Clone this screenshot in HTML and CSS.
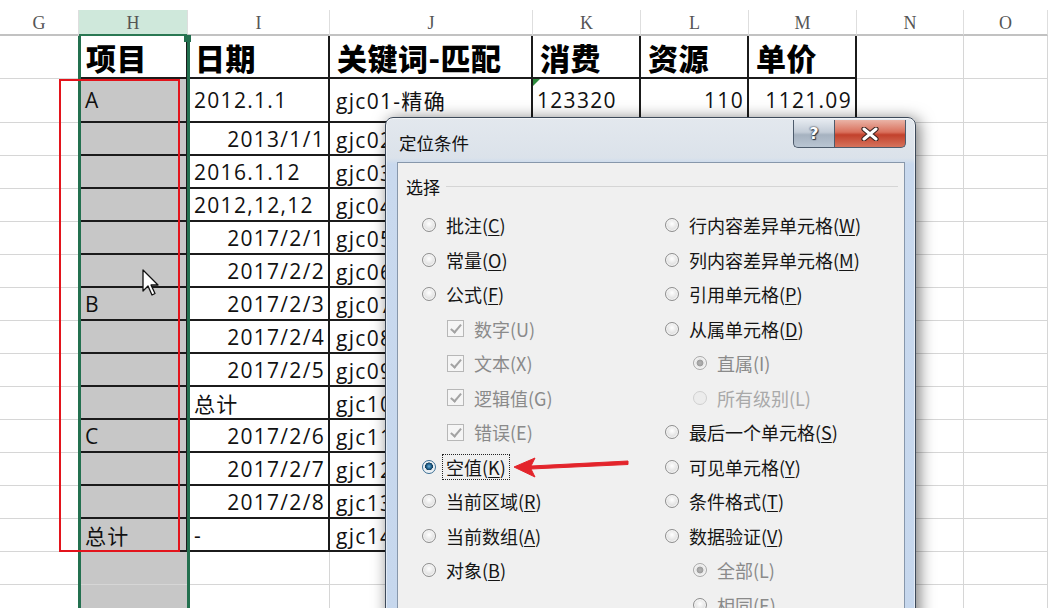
FILE: index.html
```html
<!DOCTYPE html>
<html lang="zh-CN">
<head>
<meta charset="utf-8">
<title>定位条件</title>
<link rel="stylesheet" href="styles.css">
</head>
<body>
<div class="colheads">
  <div class="ch w-g">G</div><div class="ch w-h sel">H</div><div class="ch w-i">I</div><div class="ch w-j">J</div><div class="ch w-k">K</div><div class="ch w-l">L</div><div class="ch w-m">M</div><div class="ch w-n">N</div><div class="ch w-o">O</div>
</div>
<div class="sheet">
  <div class="row rh">
    <div class="c w-g"></div><div class="c w-h t hd">项目</div><div class="c w-i t hd">日期</div><div class="c w-j t hd">关键词-匹配</div><div class="c w-k t hd">消费</div><div class="c w-l t hd">资源</div><div class="c w-m t hd">单价</div><div class="c w-n"></div><div class="c w-o"></div>
  </div>
  <div class="row ra">
    <div class="c w-g"></div><div class="c w-h t gray">A</div><div class="c w-i t">2012.1.1</div><div class="c w-j t">gjc01-精确</div><div class="c w-k t tri">123320</div><div class="c w-l t r">110</div><div class="c w-m t r">1121.09</div><div class="c w-n"></div><div class="c w-o"></div>
  </div>
  <div class="row rd"><div class="c w-g"></div><div class="c w-h t gray"></div><div class="c w-i t r">2013/1/1</div><div class="c w-j t">gjc02-精确</div><div class="c w-k t"></div><div class="c w-l t"></div><div class="c w-m t"></div><div class="c w-n"></div><div class="c w-o"></div></div>
  <div class="row rd"><div class="c w-g"></div><div class="c w-h t gray"></div><div class="c w-i t">2016.1.12</div><div class="c w-j t">gjc03-精确</div><div class="c w-k t"></div><div class="c w-l t"></div><div class="c w-m t"></div><div class="c w-n"></div><div class="c w-o"></div></div>
  <div class="row rd"><div class="c w-g"></div><div class="c w-h t gray"></div><div class="c w-i t">2012,12,12</div><div class="c w-j t">gjc04-精确</div><div class="c w-k t"></div><div class="c w-l t"></div><div class="c w-m t"></div><div class="c w-n"></div><div class="c w-o"></div></div>
  <div class="row rd"><div class="c w-g"></div><div class="c w-h t gray"></div><div class="c w-i t r">2017/2/1</div><div class="c w-j t">gjc05-精确</div><div class="c w-k t"></div><div class="c w-l t"></div><div class="c w-m t"></div><div class="c w-n"></div><div class="c w-o"></div></div>
  <div class="row rd"><div class="c w-g"></div><div class="c w-h t gray"></div><div class="c w-i t r">2017/2/2</div><div class="c w-j t">gjc06-精确</div><div class="c w-k t"></div><div class="c w-l t"></div><div class="c w-m t"></div><div class="c w-n"></div><div class="c w-o"></div></div>
  <div class="row rd"><div class="c w-g"></div><div class="c w-h t gray">B</div><div class="c w-i t r">2017/2/3</div><div class="c w-j t">gjc07-精确</div><div class="c w-k t"></div><div class="c w-l t"></div><div class="c w-m t"></div><div class="c w-n"></div><div class="c w-o"></div></div>
  <div class="row rd"><div class="c w-g"></div><div class="c w-h t gray"></div><div class="c w-i t r">2017/2/4</div><div class="c w-j t">gjc08-精确</div><div class="c w-k t"></div><div class="c w-l t"></div><div class="c w-m t"></div><div class="c w-n"></div><div class="c w-o"></div></div>
  <div class="row rd"><div class="c w-g"></div><div class="c w-h t gray"></div><div class="c w-i t r">2017/2/5</div><div class="c w-j t">gjc09-精确</div><div class="c w-k t"></div><div class="c w-l t"></div><div class="c w-m t"></div><div class="c w-n"></div><div class="c w-o"></div></div>
  <div class="row rd"><div class="c w-g"></div><div class="c w-h t gray"></div><div class="c w-i t">总计</div><div class="c w-j t">gjc10-精确</div><div class="c w-k t"></div><div class="c w-l t"></div><div class="c w-m t"></div><div class="c w-n"></div><div class="c w-o"></div></div>
  <div class="row rd"><div class="c w-g"></div><div class="c w-h t gray">C</div><div class="c w-i t r">2017/2/6</div><div class="c w-j t">gjc11-精确</div><div class="c w-k t"></div><div class="c w-l t"></div><div class="c w-m t"></div><div class="c w-n"></div><div class="c w-o"></div></div>
  <div class="row rd"><div class="c w-g"></div><div class="c w-h t gray"></div><div class="c w-i t r">2017/2/7</div><div class="c w-j t">gjc12-精确</div><div class="c w-k t"></div><div class="c w-l t"></div><div class="c w-m t"></div><div class="c w-n"></div><div class="c w-o"></div></div>
  <div class="row rd"><div class="c w-g"></div><div class="c w-h t gray"></div><div class="c w-i t r">2017/2/8</div><div class="c w-j t">gjc13-精确</div><div class="c w-k t"></div><div class="c w-l t"></div><div class="c w-m t"></div><div class="c w-n"></div><div class="c w-o"></div></div>
  <div class="row rd"><div class="c w-g"></div><div class="c w-h t gray">总计</div><div class="c w-i t">-</div><div class="c w-j t">gjc14-精确</div><div class="c w-k t"></div><div class="c w-l t"></div><div class="c w-m t"></div><div class="c w-n"></div><div class="c w-o"></div></div>
  <div class="row rd"><div class="c w-g"></div><div class="c w-h gray"></div><div class="c w-i"></div><div class="c w-j"></div><div class="c w-k"></div><div class="c w-l"></div><div class="c w-m"></div><div class="c w-n"></div><div class="c w-o"></div></div>
  <div class="row rd"><div class="c w-g"></div><div class="c w-h gray"></div><div class="c w-i"></div><div class="c w-j"></div><div class="c w-k"></div><div class="c w-l"></div><div class="c w-m"></div><div class="c w-n"></div><div class="c w-o"></div></div>
</div>

<div class="selbox"></div>
<div class="fillhandle"></div>
<div class="redbox"></div>

<svg class="cursor" width="20" height="30" viewBox="0 0 20 30">
  <path d="M1 1 L1 22 L6 17 L10 26 L13 24.5 L9 16 L16 16 Z" fill="#fff" stroke="#111" stroke-width="1.3" stroke-linejoin="round"/>
</svg>

<div class="dialog">
  <div class="titlebar">
    <span class="title">定位条件</span>
    <div class="tbtns">
      <div class="tb help">?</div>
      <div class="tb close">
        <svg width="20" height="14" viewBox="0 0 20 14"><path d="M4 2 L16 12 M16 2 L4 12" stroke="#3b2420" stroke-width="5.2" stroke-linecap="round"/><path d="M4 2 L16 12 M16 2 L4 12" stroke="#fff" stroke-width="3" stroke-linecap="round"/></svg>
      </div>
    </div>
  </div>
  <div class="client">
    <div class="group"><span>选择</span><i class="gline"></i></div>
    <div class="opts">
      <div class="col">
        <div class="opt"><span class="radio"></span><span class="lbl">批注(<u>C</u>)</span></div>
        <div class="opt"><span class="radio"></span><span class="lbl">常量(<u>O</u>)</span></div>
        <div class="opt"><span class="radio"></span><span class="lbl">公式(<u>F</u>)</span></div>
        <div class="opt sub dis"><span class="check"></span><span class="lbl">数字(U)</span></div>
        <div class="opt sub dis"><span class="check"></span><span class="lbl">文本(X)</span></div>
        <div class="opt sub dis"><span class="check"></span><span class="lbl">逻辑值(G)</span></div>
        <div class="opt sub dis"><span class="check"></span><span class="lbl">错误(E)</span></div>
        <div class="opt"><span class="radio on"></span><span class="lbl focus">空值(<u>K</u>)</span></div>
        <div class="opt"><span class="radio"></span><span class="lbl">当前区域(<u>R</u>)</span></div>
        <div class="opt"><span class="radio"></span><span class="lbl">当前数组(<u>A</u>)</span></div>
        <div class="opt"><span class="radio"></span><span class="lbl">对象(<u>B</u>)</span></div>
      </div>
      <div class="col">
        <div class="opt"><span class="radio"></span><span class="lbl">行内容差异单元格(<u>W</u>)</span></div>
        <div class="opt"><span class="radio"></span><span class="lbl">列内容差异单元格(<u>M</u>)</span></div>
        <div class="opt"><span class="radio"></span><span class="lbl">引用单元格(<u>P</u>)</span></div>
        <div class="opt"><span class="radio"></span><span class="lbl">从属单元格(<u>D</u>)</span></div>
        <div class="opt rsub dis"><span class="radio don"></span><span class="lbl">直属(I)</span></div>
        <div class="opt rsub dis faint"><span class="radio"></span><span class="lbl">所有级别(L)</span></div>
        <div class="opt"><span class="radio"></span><span class="lbl">最后一个单元格(<u>S</u>)</span></div>
        <div class="opt"><span class="radio"></span><span class="lbl">可见单元格(<u>Y</u>)</span></div>
        <div class="opt"><span class="radio"></span><span class="lbl">条件格式(<u>T</u>)</span></div>
        <div class="opt"><span class="radio"></span><span class="lbl">数据验证(<u>V</u>)</span></div>
        <div class="opt rsub dis"><span class="radio don"></span><span class="lbl">全部(L)</span></div>
        <div class="opt rsub dis"><span class="radio"></span><span class="lbl">相同(E)</span></div>
      </div>
    </div>
  </div>
</div>

<svg class="arrow" width="130" height="30" viewBox="0 0 130 30">
  <path d="M3 16 L24 7 L20 15 L117 10 L117 13.5 L20 18 L24 26 Z" fill="#e3242b" stroke="#e3242b" stroke-width="1" stroke-linejoin="round"/>
</svg>
</body>
</html>
```

FILE: styles.css
```css
* { box-sizing: border-box; margin: 0; padding: 0; }
html, body { width: 1048px; height: 608px; overflow: hidden; background: #fff; }
body { position: relative; font-family: "Open Sans", "Noto Sans CJK SC", sans-serif; color: #111; }

/* column widths */
.w-g { width: 79px; flex: none; }
.w-h { width: 109px; flex: none; }
.w-i { width: 142px; flex: none; }
.w-j { width: 203px; flex: none; }
.w-k { width: 108px; flex: none; }
.w-l { width: 108px; flex: none; }
.w-m { width: 108px; flex: none; }
.w-n { width: 107px; flex: none; }
.w-o { width: 84px; flex: none; }

/* column headers */
.colheads { display: flex; margin-top: 10px; height: 26px; }
.ch {
  height: 26px;
  border-right: 1px solid #dedede;
  border-bottom: 2px solid #c2c2c2;
  font-family: "Liberation Serif", "DejaVu Serif", serif;
  font-size: 18px;
  color: #555;
  display: flex;
  justify-content: center;
  align-items: center;
  padding-top: 3px;
}
.ch.sel { background: #cfe8db; border-bottom-color: #2a7853; }

/* sheet */
.row { display: flex; }
.rh { height: 43px; }
.ra { height: 44px; }
.rd { height: 33px; }
.c {
  display: flex;
  align-items: center;
  border-right: 1px solid #d6d6d6;
  border-bottom: 1px solid #d6d6d6;
  padding: 0 4px 0 6px;
  font-size: 21px;
  letter-spacing: 1.3px;
  white-space: nowrap;
  overflow: hidden;
}
.t { border-right: 2px solid #1b1b1b; border-bottom: 2px solid #1b1b1b; }
.gray { background: #c7c7c7; }
.r { justify-content: flex-end; padding-right: 3px; }
.hd {
  font-family: "Noto Sans CJK SC", sans-serif;
  font-weight: 900;
  font-size: 30px;
  letter-spacing: 0.5px;
  padding-left: 7px;
  color: #000;
}
.tri { position: relative; padding-left: 4px; }
.tri::before {
  content: "";
  position: absolute;
  left: 0; top: 0;
  border-top: 7px solid #2e8b3e;
  border-right: 7px solid transparent;
}

/* overlays */
.selbox {
  position: absolute;
  left: 78px; top: 36px;
  width: 112px; height: 572px;
  border-left: 3px solid #23704f;
  border-right: 3px solid #23704f;
}
.fillhandle { position: absolute; left: 184px; top: 35px; width: 7px; height: 7px; background: #23704f; }
.redbox {
  position: absolute;
  left: 59px; top: 79px;
  width: 121px; height: 473px;
  border: 2px solid #e3141c;
}
.cursor { position: absolute; left: 142px; top: 269px; }

/* dialog */
.dialog {
  position: absolute;
  left: 385px; top: 117px;
  width: 531px; height: 510px;
  border: 1px solid #3d4a5a;
  border-radius: 8px 8px 0 0;
  background: linear-gradient(to bottom, #e3e8ee 0, #dbe2ea 40px, #c9d9ee 46px, #c6d7ed 100%);
  box-shadow: 0 0 0 1px rgba(255,255,255,.5) inset, 3px 2px 16px rgba(0,0,0,.55);
  display: flex;
  flex-direction: column;
  padding: 0 10px 0 11px;
}
.titlebar {
  height: 44px;
  flex: none;
  display: flex;
  justify-content: space-between;
  align-items: flex-start;
  padding: 2px 0 0 2px;
}
.title {
  margin-top: 12px;
  font-family: "Noto Sans CJK SC", sans-serif;
  font-size: 17.5px;
  line-height: 22px;
  color: #111;
}
.tbtns { display: flex; margin-right: -1px; }
.tb {
  height: 28px;
  border: 1px solid #4d5b6c;
  border-top: none;
  display: flex;
  align-items: center;
  justify-content: center;
}
.help {
  width: 41px;
  border-radius: 0 0 0 5px;
  border-right: none;
  background: linear-gradient(to bottom, #e4e9ef 0, #c3ccd7 45%, #a6b2c0 55%, #b9c5d2 100%);
  font-family: "DejaVu Sans", sans-serif;
  font-weight: 700;
  font-size: 16px;
  color: #fff;
  text-shadow: 0 0 1px #2b3440, 0 0 2px #2b3440, 1px 1px 1px #2b3440;
}
.close {
  width: 72px;
  border-radius: 0 0 5px 0;
  background: linear-gradient(to bottom, #eab3a6 0, #d9705c 45%, #c2412c 55%, #d6735c 100%);
}

.client {
  flex: 1;
  background: #f0f0f0;
  border: 1px solid #8797ab;
  padding: 12px 8px;
  font-family: "Noto Sans CJK SC", sans-serif;
}
.group { display: flex; align-items: center; height: 22px; font-size: 17px; color: #111; }
.gline { flex: 1; height: 1px; background: #d5d5d5; margin-left: 6px; margin-right: -2px; }
.opts { display: flex; margin-top: 11px; margin-left: 16px; }
.col { width: 243px; flex: none; }
.opt { height: 34.5px; display: flex; align-items: center; font-size: 18px; color: #151515; }
.opt.sub { padding-left: 25px; }
.opt.rsub { padding-left: 28px; }
.opt.dis { color: #8a8a8a; }
.opt.faint { color: #a9a9a9; }
.lbl {
  margin-left: 6px;
  padding: 0 3px;
  line-height: 24px;
  border: 1px solid transparent;
}
.lbl.focus { border: 1px dotted #222; }
.lbl u { text-decoration-thickness: 1px; text-underline-offset: 2px; }

.radio {
  width: 14px; height: 14px;
  flex: none;
  border-radius: 50%;
  border: 1px solid #8e8e8e;
  background: radial-gradient(circle at 50% 40%, #ffffff 0, #e9e9e9 45%, #cfcfcf 100%);
  box-shadow: inset 0 0 0 1px rgba(255,255,255,.7);
}
.radio.on {
  border-color: #3b6f95;
  background: radial-gradient(circle at 50% 45%, #6fb0d9 0, #1f5f8a 28%, #143a55 42%, #e8eef3 46%, #cdd7df 100%);
}
.radio.don {
  border-color: #a9a9a9;
  background: radial-gradient(circle at 50% 50%, #b5b5b5 0, #9d9d9d 36%, #ececec 44%, #d9d9d9 100%);
}
.faint .radio { border-color: #d0d0d0; background: #ececec; box-shadow: none; }
.check {
  width: 17px; height: 17px;
  flex: none;
  border: 1px solid #b7b7b7;
  background: #f5f5f5;
  position: relative;
}
.check::after {
  content: "";
  position: absolute;
  left: 5px; top: 1px;
  width: 4px; height: 9px;
  border-right: 2px solid #a3a3a3;
  border-bottom: 2px solid #a3a3a3;
  transform: rotate(40deg);
}
.arrow { position: absolute; left: 511px; top: 451px; }
```
